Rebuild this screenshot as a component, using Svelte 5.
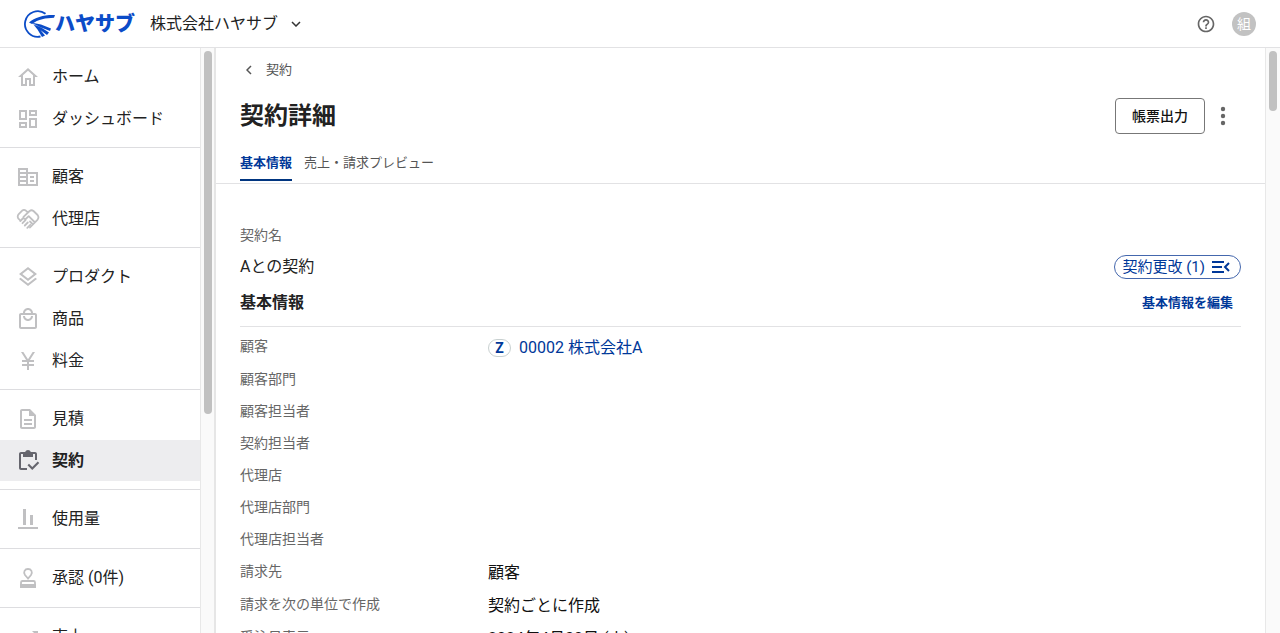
<script>
  const menu = [
    [
      { icon: 'home', label: 'ホーム' },
      { icon: 'dashboard', label: 'ダッシュボード' },
    ],
    [
      { icon: 'building', label: '顧客' },
      { icon: 'handshake', label: '代理店' },
    ],
    [
      { icon: 'layers', label: 'プロダクト' },
      { icon: 'bag', label: '商品' },
      { icon: 'yen', label: '料金' },
    ],
    [
      { icon: 'document', label: '見積' },
      { icon: 'clipboard', label: '契約' },
    ],
    [{ icon: 'usage', label: '使用量' }],
    [{ icon: 'stamp', label: '承認 (0件)' }],
    [{ icon: 'trend', label: '売上' }],
  ];

  const icons = {
    home: 'M12 3 2 12h3v9h6v-6h2v6h6v-9h3L12 3zm0 2.7 5 4.5V19h-2v-6H9v6H7v-8.8l5-4.5z',
    dashboard: 'M19 5v2h-4V5h4M9 5v6H5V5h4m10 8v6h-4v-6h4M9 17v2H5v-2h4M21 3h-8v6h8V3zM11 3H3v10h8V3zm10 8h-8v10h8V11zm-10 4H3v6h8v-6z',
    building: 'M12 7V3H2v18h20V7H12zM10 19H4v-2h6v2zm0-4H4v-2h6v2zm0-4H4V9h6v2zm0-4H4V5h6v2zm10 12h-8V9h8v10zm-2-8h-4v2h4v-2zm0 4h-4v2h4v-2z',
    layers: 'M12 2 3 9l9 7 9-7-9-7zm0 2.5L17.700 9 12 13.500 6.300 9 12 4.500zM3 14.100l9 7 9-7-1.600-1.300-7.400 5.700-7.400-5.700L3 14.100z',
    bag: 'M19 6h-2c0-2.760-2.240-5-5-5S7 3.240 7 6H5c-1.100 0-2 .9-2 2v12c0 1.100.9 2 2 2h14c1.100 0 2-.9 2-2V8c0-1.100-.9-2-2-2zm-7-3c1.660 0 3 1.340 3 3H9c0-1.660 1.340-3 3-3zm7 17H5V8h14v12zm-7-8c-1.660 0-3-1.340-3-3H7c0 2.760 2.240 5 5 5s5-2.240 5-5h-2c0 1.660-1.340 3-3 3z',
    yen: 'M13.920 11H18v2h-5v2h5v2h-5v4h-2v-4H6v-2h5v-2H6v-2h4.080L5 3h2.370L12 10.290 16.630 3H19l-5.080 8z',
    document: 'M8 16h8v2H8zm0-4h8v2H8zm6-10H6c-1.100 0-2 .9-2 2v16c0 1.100.89 2 1.990 2H18c1.100 0 2-.9 2-2V8l-6-6zm4 18H6V4h7v5h5v11z',
    clipboard: 'M5 5h2v3h10V5h2v6h2V5c0-1.100-.9-2-2-2h-4.180C14.400 1.840 13.300 1 12 1s-2.400.84-2.820 2H5c-1.100 0-2 .9-2 2v14c0 1.100.9 2 2 2h6v-2H5V5zM21.750 12.500 16.250 18 13 14.750 11.500 16.250 16.250 21l7-7z',
    usage: 'M2 20h20v2H2zM7 2h3v16H7zM14 8h3v10h-3z',
    trend: 'm16 6 2.290 2.290-4.880 4.880-4-4L2 16.590 3.410 18l6-6 4 4 6.300-6.290L22 12V6z',
  };

  const rows = [
    { label: '顧客', value: '00002 株式会社A', link: true },
    { label: '顧客部門' },
    { label: '顧客担当者' },
    { label: '契約担当者' },
    { label: '代理店' },
    { label: '代理店部門' },
    { label: '代理店担当者' },
    { label: '請求先', value: '顧客' },
    { label: '請求を次の単位で作成', value: '契約ごとに作成' },
    { label: '受注日表示', value: '2024年4月30日 (火)' },
  ];

  let current = '契約';
</script>

<div class="app">
  <header class="topbar">
    <a class="logo" href="#top" aria-label="ハヤサブ">
      <svg width="32" height="30" viewBox="0 0 32 30" aria-hidden="true">
        <path d="M22.500 4.800A12.800 12.800 0 1 0 17.500 27.500" fill="none" stroke="#0b4cc8" stroke-width="1.800" />
        <path d="M32 6C22 5.500 12 8 6 13.600L9 15C15 10.500 23 9 31 8.800z" fill="#0b4cc8" />
        <path d="M8 13.500 18 15.500 28 19.500 27 22 17 18zM11 15.500 19 19 26 23.500 24 26 16 20zM10 15 17 20.500 22 26.500 19 28 14.500 20.500z" fill="#0b4cc8" />
      </svg>
      <span>ハヤサブ</span>
    </a>
    <button class="company">
      株式会社ハヤサブ
      <svg width="10" height="6" viewBox="0 0 10 6"><path d="m1 1 4 4 4-4" fill="none" stroke="#333" stroke-width="1.500" /></svg>
    </button>
    <button class="help" aria-label="ヘルプ">
      <svg width="20" height="20" viewBox="0 0 24 24"><path fill="#666" d="M11 18h2v-2h-2v2zm1-16C6.480 2 2 6.480 2 12s4.480 10 10 10 10-4.480 10-10S17.520 2 12 2zm0 18c-4.410 0-8-3.590-8-8s3.590-8 8-8 8 3.590 8 8-3.590 8-8 8zm0-14c-2.210 0-4 1.790-4 4h2c0-1.100.9-2 2-2s2 .9 2 2c0 2-3 1.750-3 5h2c0-2.250 3-2.500 3-5 0-2.210-1.790-4-4-4z" /></svg>
    </button>
    <button class="avatar">組</button>
  </header>

  <div class="body">
    <nav class="sidebar">
      {#each menu as group}
        <ul>
          {#each group as item}
            <li>
              <a href="#{item.icon}" class:active={item.label == current}>
                <svg width="24" height="24" viewBox="0 0 24 24" fill="currentColor" aria-hidden="true">
                  {#if item.icon == 'handshake'}
                    <g fill="none" stroke="currentColor" stroke-width="1.800" stroke-linejoin="round" stroke-linecap="round">
                      <path d="M12 5.500 9.800 3.600Q8 2.300 6.200 3.600L2.700 7.100Q1 9 2.200 11.300L3.800 13M14 20.500 21.400 12.800Q23.400 10.500 21.600 8L17.500 4Q15.500 2.500 13.600 4L7.500 9.900Q7.300 12.200 9.700 12L12.700 9.200 18.500 15" />
                      <path d="m4.300 14 2.500-2.500M6.500 16.200l3-3M8.800 18.500l3-3M11.300 20.800l3-3M14 14.500l2.500 2.500" />
                    </g>
                  {:else if item.icon == 'stamp'}
                    <g fill="none" stroke="currentColor" stroke-width="1.800">
                      <path d="M12 12.500 9 9C7 6 8.800 3 12 3s5 3 3 6zM5 18v-1.500Q5 15 6.500 15h11q1.500 0 1.500 1.500V18" />
                      <path d="M4 20h16" stroke-width="4" />
                    </g>
                  {:else}
                    <path d={icons[item.icon]} />
                  {/if}
                </svg>
                {item.label}
              </a>
            </li>
          {/each}
        </ul>
      {/each}
    </nav>
    <div class="track side-track"><div class="thumb"></div></div>

    <main>
      <section class="heading">
        <a class="back" href="#contracts">
          <svg width="6" height="10" viewBox="0 0 6 10"><path d="M5 1 1 5l4 4" fill="none" stroke="#555" stroke-width="1.500" /></svg>
          契約
        </a>
        <div class="title">
          <h1>契約詳細</h1>
          <button class="output">帳票出力</button>
          <button class="more" aria-label="メニュー">
            <svg width="6" height="20" viewBox="0 0 6 20" fill="#666"><circle cx="3" cy="3" r="2.200" /><circle cx="3" cy="10" r="2.200" /><circle cx="3" cy="17" r="2.200" /></svg>
          </button>
        </div>
        <div class="tabs">
          <a class="selected" href="#basic">基本情報</a>
          <a href="#preview">売上・請求プレビュー</a>
        </div>
      </section>

      <section class="detail">
        <p class="label">契約名</p>
        <div class="name">
          <span>Aとの契約</span>
          <button class="renewal">
            契約更改 (1)
            <svg width="18" height="12" viewBox="0 0 18 12" fill="none" stroke="currentColor" stroke-width="2"><path d="M0 1h12M0 6h10M0 11h12M17 2l-4 4 4 4" /></svg>
          </button>
        </div>
        <div class="section-title">
          <h2>基本情報</h2>
          <button class="edit">基本情報を編集</button>
        </div>
        <dl>
          {#each rows as row}
            <div class="row" class:filled={row.value}>
              <dt>{row.label}</dt>
              <dd>
                {#if row.link}
                  <span class="badge">Z</span>
                  <a href="#customer">{row.value}</a>
                {:else}
                  {row.value ?? ''}
                {/if}
              </dd>
            </div>
          {/each}
        </dl>
      </section>
    </main>
    <div class="track main-track"><div class="thumb"></div></div>
  </div>
</div>

<style>
  :global(body) {
    overflow: hidden;
    color: #222;
    background: #fff;
    font-family: Roboto, "Noto Sans CJK JP", sans-serif;
    font-size: 16px;
    line-height: 24px;
  }

  * {
    box-sizing: border-box;
  }

  .app {
    height: 100vh;
    display: flex;
    flex-direction: column;
  }

  a {
    color: inherit;
    text-decoration: none;
  }

  button {
    padding: 0;
    border: none;
    background: none;
    color: inherit;
    font: inherit;
    cursor: pointer;
  }

  .topbar {
    flex: none;
    display: flex;
    align-items: center;
    height: 48px;
    padding: 0 24px 0 23px;
    border-bottom: 1px solid #e2e2e4;
  }

  .logo {
    display: flex;
    align-items: center;
    margin-right: 15px;
    color: #0b4cc8;
    font-size: 20px;
    font-weight: 900;
  }

  .company {
    display: flex;
    align-items: center;
    gap: 13px;
    margin-right: auto;
  }

  .help {
    display: flex;
    margin-right: 16px;
  }

  .avatar {
    width: 24px;
    height: 24px;
    border-radius: 50%;
    background: #c2c2c2;
    color: #fff;
    font-size: 14px;
    line-height: 22px;
  }

  .body {
    flex: 1;
    display: flex;
    min-height: 0;
  }

  .sidebar {
    flex: none;
    width: 200px;
    overflow: hidden;
  }

  ul {
    display: flex;
    flex-direction: column;
    gap: 1px;
    margin: 0;
    padding: 8px 0;
    list-style: none;
    border-bottom: 1px solid #dddde0;
  }

  li a {
    display: flex;
    align-items: center;
    gap: 12px;
    height: 41px;
    padding: 0 16px;
  }

  li:only-child a {
    height: 42px;
  }

  li svg {
    flex: none;
    color: #c0c0c2;
  }

  .active {
    background: #ededef;
    font-weight: 700;
  }

  .active svg {
    color: #66666e;
  }

  .track {
    flex: none;
    padding: 3px;
    background: #fafafa;
    border-left: 1px solid #e8e8e8;
  }

  .side-track {
    width: 16px;
    border-right: 2px solid #e6e6e6;
  }

  .main-track {
    width: 15px;
  }

  .thumb {
    width: 8px;
    border-radius: 4px;
    background: #c1c1c1;
  }

  .side-track .thumb {
    height: 363px;
  }

  .main-track .thumb {
    height: 60px;
  }

  main {
    flex: 1;
    min-width: 0;
    overflow: hidden;
  }

  .heading {
    display: flex;
    flex-direction: column;
    padding: 12px 24px 0;
    border-bottom: 1px solid #e2e2e4;
  }

  .back {
    display: flex;
    align-items: center;
    align-self: flex-start;
    gap: 14px;
    height: 20px;
    padding-left: 6px;
    color: #555;
    font-size: 13px;
  }

  .title {
    display: flex;
    align-items: center;
    height: 40px;
    margin-top: 16px;
  }

  h1 {
    flex: 1;
    margin: 0;
    font-size: 24px;
    line-height: 36px;
  }

  .output {
    width: 90px;
    height: 36px;
    border: 1px solid #777;
    border-radius: 4px;
    color: #111;
    font-size: 14px;
    font-weight: 500;
  }

  .more {
    display: flex;
    justify-content: center;
    width: 36px;
  }

  .tabs {
    display: flex;
    gap: 12px;
    margin-top: 10px;
    color: #555;
    font-size: 13px;
  }

  .tabs a {
    height: 37px;
    padding-top: 5px;
  }

  .tabs .selected {
    height: 35px;
    border-bottom: 2px solid #003580;
    color: #003899;
    font-weight: 700;
  }

  .detail {
    padding: 39px 24px 0;
  }

  .label {
    margin: 0;
    color: #666;
    font-size: 14px;
  }

  .name {
    display: flex;
    align-items: center;
    justify-content: space-between;
    height: 24px;
    margin-top: 8px;
  }

  .renewal {
    display: flex;
    align-items: center;
    gap: 7px;
    height: 24px;
    padding: 0 10px 0 7px;
    border: 1px solid #4467ad;
    border-radius: 12px;
    color: #003899;
    font-size: 15px;
  }

  .section-title {
    display: flex;
    align-items: center;
    justify-content: space-between;
    height: 48px;
    border-bottom: 1px solid #e2e2e4;
  }

  h2 {
    margin: 0;
    font-size: 16px;
  }

  .edit {
    padding-right: 8px;
    color: #003899;
    font-size: 13px;
    font-weight: 700;
  }

  dl {
    margin: 0;
    padding-top: 4px;
  }

  .row {
    display: flex;
    height: 32px;
  }

  .row.filled {
    height: 33px;
  }

  dt {
    width: 248px;
    padding-top: 3px;
    color: #666;
    font-size: 14px;
  }

  dd {
    display: flex;
    align-items: center;
    gap: 8px;
    margin: 0;
    color: #111;
  }

  dd a {
    color: #003899;
  }

  .badge {
    width: 23px;
    height: 18px;
    border: 1px solid #c8d0d0;
    border-radius: 9px;
    color: #003899;
    font-size: 14px;
    font-weight: 700;
    line-height: 17px;
    text-align: center;
  }
</style>
